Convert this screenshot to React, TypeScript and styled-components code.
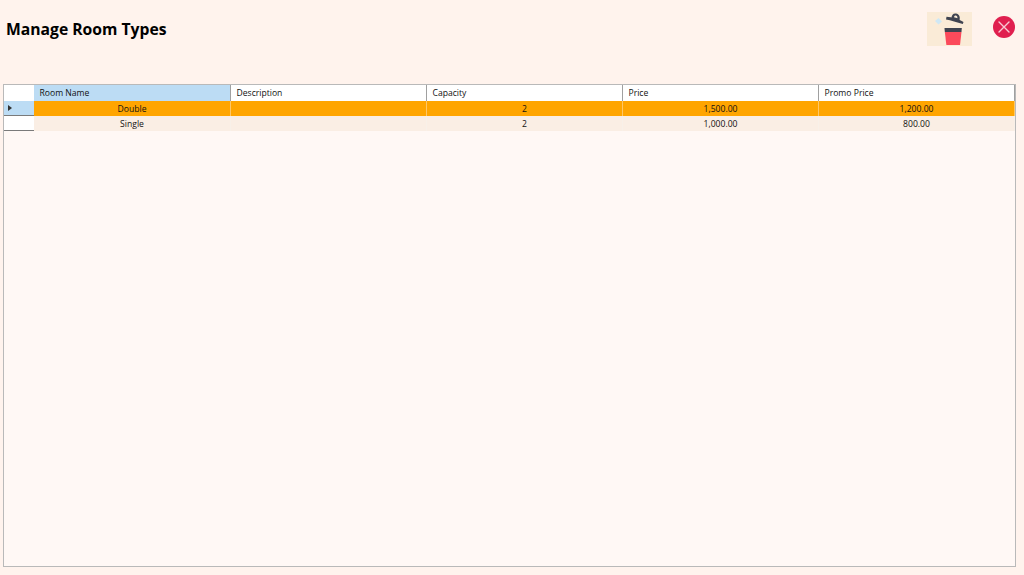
import styled, { createGlobalStyle } from 'styled-components'

const GlobalStyle = createGlobalStyle`
  html, body {
    margin: 0;
    padding: 0;
    height: 100%;
    background-color: #fff3ed;
    font-family: 'Open Sans', 'Noto Sans', sans-serif;
  }
  #root {
    height: 100%;
  }
`

const columns = [
  { key: 'name', label: 'Room Name' },
  { key: 'description', label: 'Description' },
  { key: 'capacity', label: 'Capacity' },
  { key: 'price', label: 'Price' },
  { key: 'promo', label: 'Promo Price' },
]

const rows = [
  { name: 'Double', description: '', capacity: '2', price: '1,500.00', promo: '1,200.00' },
  { name: 'Single', description: '', capacity: '2', price: '1,000.00', promo: '800.00' },
]

function App() {
  return (
    <Page>
      <GlobalStyle />
      <TopBar>
        <Title>Manage Room Types</Title>
        <Actions>
          <DeleteButton aria-label='Delete'>
            <svg width='45' height='34' viewBox='0 0 45 34'>
              <path d='M8 9 L11.5 6 L15 9.5 L11.5 12.5 Z' fill='#cfe8f5' />
              <path d='M19.5 4.8 C25 5 32 7.2 36.5 10 L35.8 12 C30 10.2 24 8.5 19 7.5 Z' fill='#3f4350' />
              <path
                fillRule='evenodd'
                d='M24.5 6 C24.5 3 26.5 1 29 1.5 C32 2 33.5 4.5 32.5 8.5 Z M27 5.2 L30.4 6.2 C30.6 4.6 29.8 3.6 28.7 3.5 C27.8 3.4 27.2 4.1 27 5.2 Z'
                fill='#3f4350'
              />
              <path d='M17.5 16 H34.8 L34.5 20 H17.8 Z' fill='#3f4350' />
              <path d='M17.8 20 H34.5 L33 33 H19.4 Z' fill='#fb4a5b' />
            </svg>
          </DeleteButton>
          <CloseButton aria-label='Close'>
            <svg width='22' height='22' viewBox='0 0 22 22'>
              <circle cx='11' cy='11' r='11' fill='#e01f4f' />
              <path d='M6 6 L16 16 M16 6 L6 16' stroke='#f8c9d3' strokeWidth='1.4' strokeLinecap='round' />
            </svg>
          </CloseButton>
        </Actions>
      </TopBar>
      <Grid>
        <HeaderRow>
          <Corner />
          {columns.map((col, i) => (
            <HeaderCell key={col.key} $active={i === 0}>
              {col.label}
            </HeaderCell>
          ))}
        </HeaderRow>
        {rows.map((row, i) => (
          <Row key={row.name} $selected={i === 0}>
            <RowHeader $selected={i === 0}>{i === 0 && <Arrow />}</RowHeader>
            {columns.map((col) => (
              <Cell key={col.key} $selected={i === 0}>
                {row[col.key as keyof typeof row]}
              </Cell>
            ))}
          </Row>
        ))}
      </Grid>
    </Page>
  )
}

const Page = styled.div`
  display: flex;
  flex-direction: column;
  height: 575px;
  padding: 0 8px 8px 3px;
  box-sizing: border-box;
`

const TopBar = styled.div`
  display: flex;
  justify-content: space-between;
  align-items: flex-start;
  height: 84px;
  flex-shrink: 0;
  padding: 0 0 0 3px;
  box-sizing: border-box;
`

const Title = styled.div`
  margin-top: 19px;
  color: #000;
  font-size: 15.7px;
  line-height: 21px;
  font-weight: 700;
`

const Actions = styled.div`
  display: flex;
  align-items: flex-start;
  gap: 21px;
  margin-top: 12px;
  margin-right: 1px;
`

const DeleteButton = styled.div`
  display: flex;
  width: 45px;
  height: 34px;
  background-color: #faebd7;
`

const CloseButton = styled.div`
  display: flex;
  width: 22px;
  height: 22px;
  margin-top: 4px;
`

const Grid = styled.div`
  flex: 1;
  border: 1px solid #b9b9b9;
  background-color: #fff8f5;
  font-size: 8.6px;
  color: #111;
`

const HeaderRow = styled.div`
  display: grid;
  grid-template-columns: 30px 197px 196px 196px 196px 1fr;
  height: 16px;
`

const Corner = styled.div`
  background-color: #fff;
`

const HeaderCell = styled.div<{ $active?: boolean }>`
  display: flex;
  align-items: center;
  padding: 0 0 1px 5.5px;
  background-color: ${(p) => (p.$active ? '#bcdcf4' : '#fff')};
  border-right: 1px solid #a0a0a0;
  box-sizing: border-box;
`

const Row = styled.div<{ $selected?: boolean }>`
  display: grid;
  grid-template-columns: 30px 197px 196px 196px 196px 1fr;
  height: 15px;
  background-color: ${(p) => (p.$selected ? '#ffa500' : '#faeee4')};
`

const RowHeader = styled.div<{ $selected?: boolean }>`
  display: flex;
  align-items: center;
  padding-left: 4px;
  background-color: ${(p) => (p.$selected ? '#bcdcf4' : '#fff')};
  border-bottom: 1px solid #7a7a7a;
  box-sizing: border-box;
`

const Arrow = styled.span`
  width: 0;
  height: 0;
  border-top: 3px solid transparent;
  border-bottom: 3px solid transparent;
  border-left: 4px solid #333;
`

const Cell = styled.div<{ $selected?: boolean }>`
  display: flex;
  align-items: center;
  justify-content: center;
  border-right: 1px solid ${(p) => (p.$selected ? '#ffc766' : '#f8f0e8')};
  box-sizing: border-box;
`

export default App
